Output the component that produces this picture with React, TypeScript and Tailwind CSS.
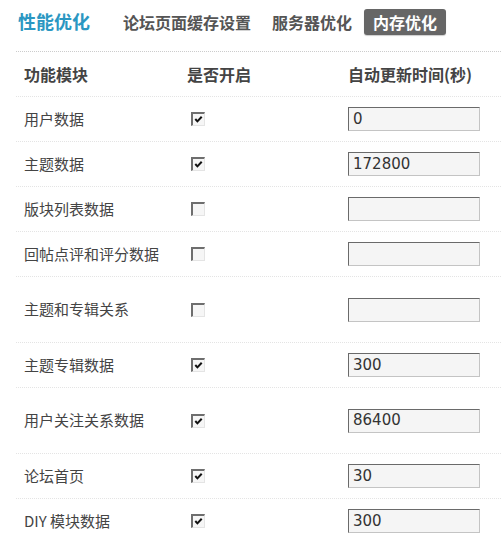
import React from "react";

const rows = [
  { name: "用户数据", on: true, value: "0", h: "h-[45px]" },
  { name: "主题数据", on: true, value: "172800", h: "h-[45px]" },
  { name: "版块列表数据", on: false, value: "", h: "h-[45px]" },
  { name: "回帖点评和评分数据", on: false, value: "", h: "h-[45px]" },
  { name: "主题和专辑关系", on: false, value: "", h: "h-[66px]" },
  { name: "主题专辑数据", on: true, value: "300", h: "h-[45px]" },
  { name: "用户关注关系数据", on: true, value: "86400", h: "h-[66px]" },
  { name: "论坛首页", on: true, value: "30", h: "h-[45px]" },
  { name: "DIY 模块数据", on: true, value: "300", h: "h-[45px]" },
];

const cjk = { fontFamily: '"Noto Sans CJK SC", sans-serif' };

function Checkbox({ on }: { on: boolean }) {
  return (
    <span className="block h-[14px] w-[14px] border-t-2 border-l-2 border-r border-b border-t-[#6e6e6e] border-l-[#6e6e6e] border-r-[#e4e4e4] border-b-[#e4e4e4] bg-[#f6f6f6]">
      {on && (
        <svg viewBox="0 0 12 12" className="h-full w-full">
          <path d="M2.5 5.5 L4.8 8 L9.5 3" fill="none" stroke="#111" strokeWidth="2.2" />
        </svg>
      )}
    </span>
  );
}

export default function App() {
  return (
    <div className="h-[537px] w-[501px] overflow-hidden bg-white pl-[16px] text-[#333]" style={cjk}>
      {/* top bar */}
      <div className="flex h-[43px] items-center">
        <span className="ml-[2px] text-[18px] font-bold text-[#2a97c2]">性能优化</span>
        <div className="ml-[24px] flex items-center gap-[3px] text-[16px] font-bold">
          <span className="px-[9px] py-[1px] text-[#555]">论坛页面缓存设置</span>
          <span className="px-[9px] py-[1px] text-[#555]">服务器优化</span>
          <span className="rounded-[3px] bg-[#666] px-[9px] py-[1px] text-white shadow-[0_1px_1px_#ccc]">
            内存优化
          </span>
        </div>
      </div>

      <div className="mt-[8px] border-t border-dotted border-[#ccc]" />

      {/* header */}
      <div className="flex h-[45px] items-center border-b border-dotted border-[#e4e4e4] text-[16px] font-bold text-[#444]">
        <div className="w-[171px] pl-[8px]">功能模块</div>
        <div className="w-[161px]">是否开启</div>
        <div>自动更新时间(秒)</div>
      </div>

      {rows.map((r) => (
        <div
          key={r.name}
          className={`flex items-center border-b border-dotted border-[#e4e4e4] text-[15px] ${r.h}`}
        >
          <div className="w-[171px] pl-[8px] text-[#444]">{r.name}</div>
          <div className="w-[161px] pl-[4px]">
            <Checkbox on={r.on} />
          </div>
          <div
            className="flex h-[24px] w-[132px] items-center border-t border-l border-r border-b border-t-[#6a6a6a] border-l-[#6a6a6a] border-r-[#c4c4c4] border-b-[#c4c4c4] bg-[#f5f5f5] pl-[4px] text-[15px] text-[#333]"
            style={{ fontFamily: '"DejaVu Sans", sans-serif' }}
          >
            {r.value}
          </div>
        </div>
      ))}
    </div>
  );
}
